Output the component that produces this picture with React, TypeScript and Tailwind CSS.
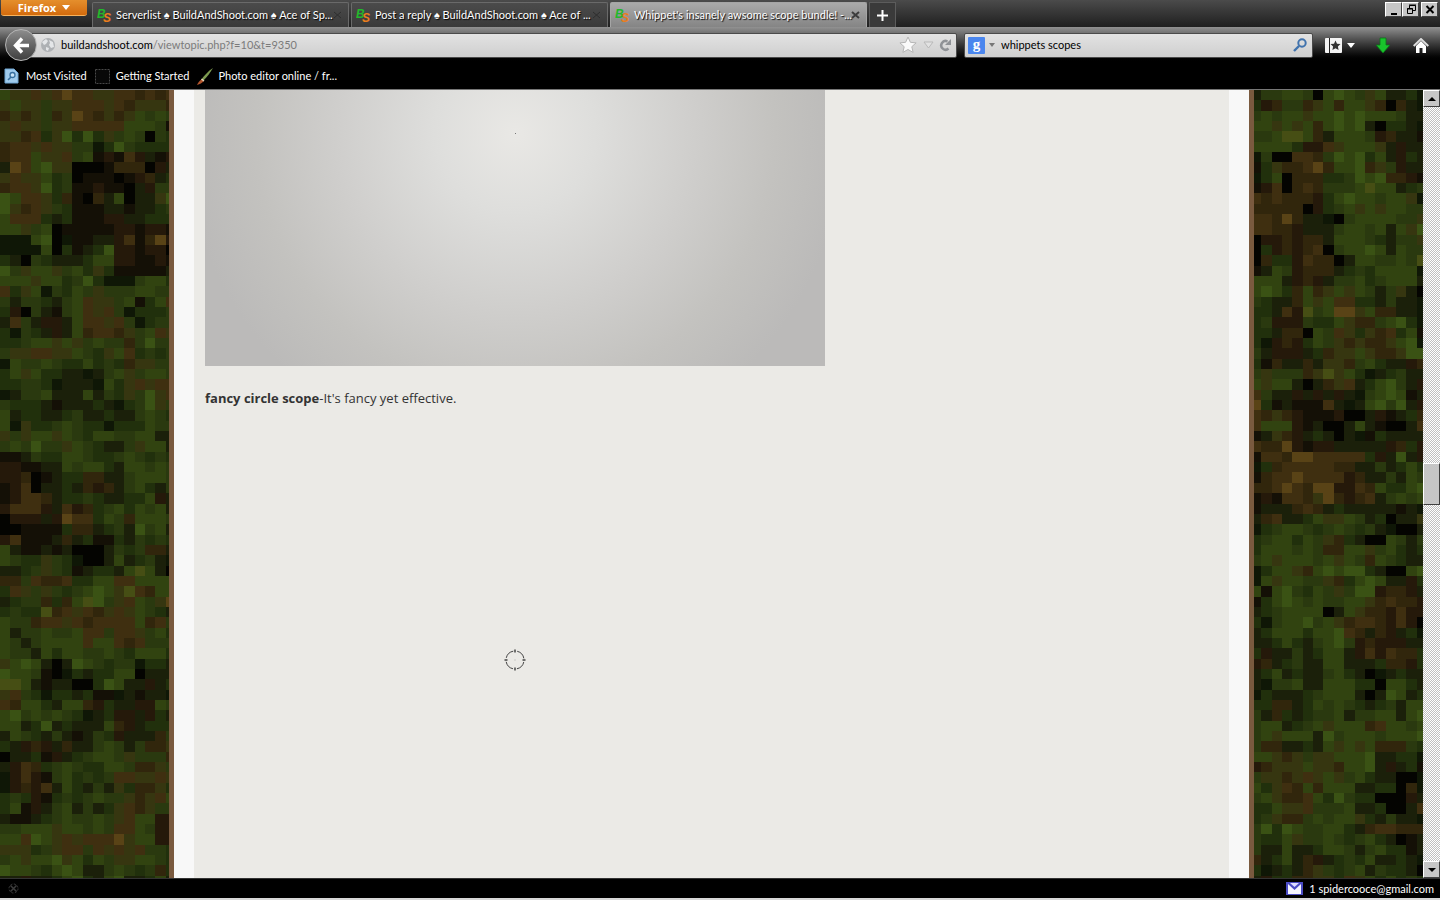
import type { ReactNode } from "react";

const camoColors: Record<string, string> = {
  k: "#040401",
  d: "#141006",
  e: "#0f1706",
  D: "#1b200a",
  f: "#21300c",
  g: "#2a390f",
  h: "#314310",
  G: "#3a5214",
  o: "#363610",
  O: "#464e14",
  b: "#3f2f10",
  B: "#594316",
  r: "#25190a",
  n: "#31260c",
};

// one letter per block, see camoColors
const leftCamo = [
  "hoobobBbboobbnbnb", "ohoogoobbbobnooon", "nonognoBbnonohghg", "oboogoobbbbbhhhgd", "oonbfoGfGfoghgkgf",
  "nbbobooggefGgffff", "nbbhoobghdrdbrDdr", "DBbhGookkkdnnnkrD", "oboohfgkdddkdrnDf", "nbboGfgddrddkDrgg",
  "GhbbofndknDhkDDoG", "GonbogfdddDDdDDfg", "hbbbfDfdddrrDDfff", "hhoghkdddddrrdrrd", "eeehGkeddDDrbdnBr",
  "eeeehkfdDfGrrdrrk", "fDkgfDDDfhhrrddrd", "GgohhoghfofdddddD", "hhhohhfgGfeeeghhf", "bfohegfhgoggghhgg",
  "gDggfDghbooghdfhb", "frkgDdghbobgefffg", "DbgDrrDhbbobgefgg", "fegfDrDhnbbnoghbo", "ffghhohoghggngGgg",
  "goobboohgfohbfgfg", "ehgghgffhfgfnoogg", "fhohffDDeDghoghhg", "ffggfeDDDehfobobb", "eDgghDDDhDgfogGob",
  "gfffDdDDDfDefgGog", "hDffDDfgDDfDDghgf", "heoffghgffefffhgg", "ogohhohgfhhgghhDD", "ghgGggohgfDDgohhD",
  "ddDgffhhgffghgfgf", "rrddDDhghhfDhhghg", "rrnkdDffnnDDghhhg", "drbkDDfDnrnDghfDg", "drbbnDffgfDDffhrD",
  "rbbbrDbrnfghfhghD", "krrrDrBbbfhgnhhhg", "kkddddfnnDfgDGghD", "rbdddDnDfddfDgfgf", "hDddDdDkkkDgfgnnD",
  "hgffogfekkDhDfgDe", "DDfgogfdDffDhOhDk", "nngbnnbffhhbbhhhh", "fbogogfghGhoObnhh", "DfggnfnhOGgobhgoB",
  "fgffOnbobnobohgfD", "hggnbbobnbbbbhnbg", "hDgghgghbbgbboghf", "hgDghhhhbhhbnbggg", "hggDhfhhgghgfhhhf",
  "ohGhDkDGhgfggeffD", "GhhgdkefDffhhkDDD", "OOhDdDDkkfGhDDrDf", "obgfeffDfddeDdDDe", "bnhhfDhhnrfDDrrhg",
  "hGghghgfeDfrrDrfD", "hhDfGDfDDDhnrDfff", "DhgfDgDdDgfrDDDng", "fDrnrDnDDghgDgnno", "kDDfdrDfghhgogggn",
  "Drbnfghgffhhgnnog", "erbrdghfgfgbboobo", "ernrbDhfDgDofnnof", "fgfrdfgfghggonobh", "fhdrDghDgDfobnogg",
  "DddDfghgghgobhhrr", "gghhhohhghgbbhgrr", "hhbGhobobbbBohhrr", "ooofgobbgbobobggf", "ghohhGohfhgoohhgf",
  "GhhgfhGhDDghgfgnf", "DDrDDfhGfDhGDDfhD",
];

const rightCamo = [
  "DgghhgkhGhgohDDfe", "frnggnohnhhonknDe", "ghghhohhGhGhhhgDD", "hhohohnhGhGDkffDe", "gghOOhnDhhhgrnDDd",
  "hhhhfrrbohhhoDrDD", "egkkbbngGhGfhDrfD", "dfonnbBnhhGnogrDD", "efhknnnffgGhGnnrd", "drbknbnggghOhhDfg",
  "bnbnnnrfhGhhghhoe", "nnnnnkrfghohohhgg", "bbnBnDDekghhhhggo", "bbnnrDDDghhghDhoG", "krrnrnnDhhhgfDggo",
  "kfrnrnbkghhGhDhgg", "knffrbnnkDhhgghgO", "dDhgrnnnDfgfhhhhe", "hhhDrnrDgghfghhhD", "hGhfnhnohohgDgoDk",
  "gfDDnhohbbffDgDDe", "ffDbrOghBBohnnDDe", "fgrrrgffhonnghGfe", "ffDnnkhgbofonbfhd", "fernrfhgononnohGe",
  "gDrrrDfnoohonnoGG", "fdnDDnDoonghfDDrn", "gogggnoOohfeDfgDD", "hohhDkDnobDfhGgDr", "bgDDrDrDrDeghGhdD",
  "BfdDdddbDeDhGgGDr", "bnonrdddrkkDrdDfn", "bhhhrdDkkDhDdkkDb", "dDonrDfDkDedfDDDD", "bnnBrdrrDDDDDrnfr",
  "dbbnBBbbbbbfrDGDr", "efnbbbbbnnDDgDfhf", "dnbbBbbbbrnDDgDhg", "nnbBbnBBrrbnhffhG", "drdbbnoBnrnbDghgh",
  "dDDDnbnDfDDDDDdDe", "DnbDDfhoohgDfkDDo", "efghhgfghgfgDekkD", "fghhfhgonfDkkhgDg", "fhhhghgnnhhoghfDf",
  "ghohhhghohgnhgfDD", "efhhonhGhGGfDkkhG", "ehohhggonfhGhDDrf", "hdhGgfhgogGGrnnrD", "dfhGhghgghhonbnnr",
  "DfghhhhkDhonnrbrr", "feghhGghonbbnrbrk", "DfhhhfhhGbnDnrDfe", "DDfhfDghGgrnrrrDD", "frDDgDfhhDrbrbnnf",
  "rnDfgDDhhDDDfnnrf", "DfhDfDDghfDkeDfDD", "DegghDDhhhffkhhfD", "efDDDfghhhDkDGhDf", "ffnnDfhghgfDfgDhh",
  "gDnfDfgghDgghhDhG", "ghhDfghohhhnbhhgh", "ghohhhDGghhhghhhG", "gnnDDfDhohohnnngf", "hhonogoohhhGDDffe",
  "rnooohoonhhGDrDfd", "goonobohoghfDDkke", "hfobnhnhhhDDffkne", "ghonnbhfGgffkkkrD", "ffhoobggghDDfkkDb",
  "fgonnghghhofDgDDe", "gGfGhgghhfDnbbnnn", "gffhogghgfghfDkdD", "gDDhDDfhhgDghffdD", "nDfhDnrDfgfhDDfDe",
  "feDfDnogfghDgffDk", "Drffnnoofbohfhfgf",
];

function Camo({ rows }: { rows: string[] }) {
  return (
    <svg className="h-[796px] w-[176px] shrink-0" viewBox="0 0 17 77" preserveAspectRatio="none" shapeRendering="crispEdges" aria-hidden="true">
      {rows.map((row, y) =>
        row.split("").map((c, x) => <rect key={`${x}-${y}`} x={x} y={y} width="1" height="1" fill={camoColors[c]} />)
      )}
    </svg>
  );
}

function SiteLogo() {
  return (
    <svg width="17" height="19" viewBox="0 0 17 19" className="shrink-0" aria-hidden="true">
      <text x="0" y="12" fill="#22b82c" fontFamily="Liberation Sans" fontStyle="italic" fontWeight="bold" fontSize="12">B</text>
      <text x="6" y="16" fill="#ea7d1c" fontFamily="Liberation Sans" fontStyle="italic" fontWeight="bold" fontSize="12">S</text>
    </svg>
  );
}

const tabs = [
  { title: "Serverlist ♠ BuildAndShoot.com ♠ Ace of Sp...", active: false },
  { title: "Post a reply ♠ BuildAndShoot.com ♠ Ace of ...", active: false },
  { title: "Whippet's insanely awsome scope bundle! -...", active: true },
];

function BrowserTab({ title, active }: { title: string; active: boolean }) {
  return (
    <div
      className={`flex h-[25px] w-[257px] min-w-0 items-center rounded-t-[2px] border-x border-t pr-1 pl-1 ${
        active
          ? "border-[#a5a5a5] bg-linear-to-b from-[#aaaaaa] to-[#858585]"
          : "border-[#6a6a6a] bg-linear-to-b from-[#4b4b4b] to-[#3a3a3a]"
      }`}
    >
      <SiteLogo />
      <button className="ml-0.5 min-w-0 flex-1 text-left whitespace-nowrap text-white [text-shadow:1px_1px_1px_#000]">
        {title}
      </button>
      <button aria-label="Close tab" className={active ? "text-[#3c3c3c]" : "text-[#2e2e2e]"}>
        <svg width="13" height="13" viewBox="0 0 13 13">
          <path d="M3 3l7 6M10 3l-7 6" stroke="currentColor" strokeWidth={active ? 2 : 1} />
        </svg>
      </button>
    </div>
  );
}

function ClassicButton({ label, className, children }: { label: string; className: string; children: ReactNode }) {
  return (
    <button
      aria-label={label}
      className={`flex shrink-0 items-center justify-center border border-t-white border-r-[#404040] border-b-[#404040] border-l-white bg-[#c6c6c6] text-black ${className}`}
    >
      {children}
    </button>
  );
}

function TabStrip() {
  return (
    <div className="flex h-[27px] items-start bg-linear-to-b from-[#4b4b4b] to-[#202020]">
      <button className="ml-px flex h-4 w-[86px] shrink-0 items-center justify-center gap-1.5 rounded-b-[3px] border-b border-[#f8b25c] bg-linear-to-b from-[#e58f2c] to-[#d36b0c] font-['Open_Sans',sans-serif] text-[11px] leading-4 font-bold text-white">
        Firefox
        <svg width="8" height="5" viewBox="0 0 8 5">
          <path d="M0 0h8L4 5z" fill="#fff" />
        </svg>
      </button>
      <div className="mt-0.5 ml-[5px] flex min-w-0 gap-0.5">
        {tabs.map((tab) => (
          <BrowserTab key={tab.title} {...tab} />
        ))}
        <button aria-label="New tab" className="flex h-[25px] w-[27px] shrink-0 items-center justify-center border-x border-t border-[#5c5c5c] bg-[#3a3a3a]">
          <svg width="11" height="11" viewBox="0 0 11 11">
            <path d="M5.5 0v11M0 5.5h11" stroke="#fff" strokeWidth="2" />
          </svg>
        </button>
      </div>
      <div className="mt-0.5 mr-0.5 ml-auto flex">
        <ClassicButton label="Minimize" className="h-[15px] w-[17px]">
          <svg width="12" height="11" viewBox="0 0 12 11"><path d="M3 9h6v2H3z" /></svg>
        </ClassicButton>
        <ClassicButton label="Restore" className="h-[15px] w-[17px]">
          <svg width="12" height="11" viewBox="0 0 12 11" fill="none" stroke="#000">
            <path d="M4.5 4V1.5h6v5H8M4 1h7" />
            <path d="M2.5 4.5h5v5h-5zM2 5h6" />
          </svg>
        </ClassicButton>
        <ClassicButton label="Close" className="ml-0.5 h-[15px] w-[17px]">
          <svg width="12" height="11" viewBox="0 0 12 11"><path d="M2.5 2l7 7M9.5 2l-7 7" stroke="#000" strokeWidth="2" /></svg>
        </ClassicButton>
      </div>
    </div>
  );
}

function Toolbar() {
  return (
    <div className="flex h-9 items-center bg-linear-to-b from-[#929292] to-black pl-[5px]">
      <button aria-label="Back" className="z-10 flex size-8 shrink-0 items-center justify-center rounded-full border border-[#b5b5b5] bg-linear-to-b from-[#8d8d8d] to-[#404040]">
        <svg width="17" height="17" viewBox="0 0 17 17" fill="none" stroke="#fff" strokeWidth="3.4">
          <path d="M9 1.5L2.5 8.5L9 15.5M3 8.5h13" />
        </svg>
      </button>
      <div className="-ml-2 flex h-[25px] min-w-0 flex-1 items-center rounded-[2px] border border-[#4a4a4a] bg-linear-to-b from-[#e2e2e2] to-[#cfcfcf] pr-1 pl-2.5">
        <svg width="16" height="16" viewBox="0 0 16 16" className="shrink-0">
          <circle cx="8" cy="8" r="7" fill="#aeb1b4" />
          <path d="M2 5l4-3 2 2-2 3-2 1zM9 3l4 2 1 5-3 1-2-3 1-2zM6 10l3 1-1 3-2-1z" fill="#e4e6e8" />
        </svg>
        <div className="ml-[5px] flex-1 text-[#7b7b7b]">
          <span className="text-black">buildandshoot.com</span>/viewtopic.php?f=10&amp;t=9350
        </div>
        <button aria-label="Bookmark this page">
          <svg width="18" height="18" viewBox="0 0 18 18">
            <path d="M9 1l2.4 5.3 5.7.6-4.3 3.8 1.3 5.7L9 13.5l-5.1 2.9 1.3-5.7L.9 6.9l5.7-.6z" fill="#fafafa" stroke="#b5b5b5" />
          </svg>
        </button>
        <button aria-label="Show history" className="ml-1.5">
          <svg width="11" height="8" viewBox="0 0 11 8"><path d="M1 1h9L5.5 7z" fill="#e2e2e2" stroke="#b9b9b9" /></svg>
        </button>
        <button aria-label="Reload" className="ml-1">
          <svg width="14" height="14" viewBox="0 0 14 14" fill="none">
            <path d="M9.5 3.5A4.3 4.3 0 1 0 10.5 10.5" stroke="#8f9296" strokeWidth="2.5" />
            <path d="M13 1v6H7z" fill="#8f9296" />
          </svg>
        </button>
      </div>
      <div className="ml-[7px] flex h-[25px] w-[349px] items-center rounded-[2px] border border-[#4a4a4a] bg-linear-to-b from-[#e2e2e2] to-[#cfcfcf] pr-1 pl-[3px]">
        <button aria-label="Search engine" className="flex items-center gap-1">
          <svg width="17" height="17" viewBox="0 0 17 17">
            <rect width="17" height="17" rx="1" fill="#4a86ee" />
            <text x="8.5" y="12" textAnchor="middle" fill="#fff" fontFamily="Liberation Serif" fontWeight="bold" fontSize="15">g</text>
          </svg>
          <svg width="6" height="4" viewBox="0 0 6 4"><path d="M0 0h6L3 4z" fill="#777" /></svg>
        </button>
        <input aria-label="Search" defaultValue="whippets scopes" className="ml-1.5 min-w-0 flex-1 bg-transparent text-black outline-none" />
        <button aria-label="Search" className="mr-px">
          <svg width="14" height="14" viewBox="0 0 14 14" fill="none" stroke="#4173ad">
            <circle cx="9" cy="5" r="3.7" strokeWidth="2" />
            <path d="M6 8l-5 5" strokeWidth="2.4" />
          </svg>
        </button>
      </div>
      <button aria-label="Bookmarks" className="ml-3 flex items-center gap-[5px]">
        <svg width="17" height="15" viewBox="0 0 17 15">
          <rect width="17" height="15" rx="1" fill="#f4f4f4" />
          <path d="M4.5 0v15" stroke="#222" />
          <path d="M10.5 2.5l1.5 3.2 3.5.4-2.6 2.4.7 3.5-3.1-1.7-3.1 1.7.7-3.5-2.6-2.4 3.5-.4z" fill="#333" />
        </svg>
        <svg width="8" height="5" viewBox="0 0 8 5"><path d="M0 0h8L4 5z" fill="#fff" /></svg>
      </button>
      <button aria-label="Downloads" className="ml-5">
        <svg width="16" height="17" viewBox="0 0 16 17">
          <path d="M5 1h6v7h4l-7 8-7-8h4z" fill="#19c42c" stroke="#0a7317" strokeWidth=".8" />
        </svg>
      </button>
      <button aria-label="Home" className="mr-[11px] ml-[22px]">
        <svg width="16" height="15" viewBox="0 0 16 15">
          <path d="M3 8l5-5 5 5v7H9.500v-5h-3v5H3z" fill="#fff" />
          <path d="M.7 8L8 1l7.3 7" fill="none" stroke="#ddd" strokeWidth="2" />
        </svg>
      </button>
    </div>
  );
}

function BookmarksBar() {
  return (
    <nav className="flex h-[27px] items-center border-b border-[#777] bg-black pl-1 text-white">
      <a href="#visited" className="flex items-center gap-1.5">
        <svg width="16" height="16" viewBox="0 0 16 16">
          <path d="M1 1h9l4 4v10H1z" fill="#9fcaec" stroke="#6ea5d2" />
          <circle cx="8.5" cy="7" r="2.5" fill="#c9e4f8" stroke="#376f9f" strokeWidth="1.3" />
          <path d="M7 9l-3 3" stroke="#376f9f" strokeWidth="1.6" />
        </svg>
        Most Visited
      </a>
      <a href="#started" className="ml-2 flex items-center gap-1.5">
        <svg width="15" height="15" viewBox="0 0 15 15">
          <rect x=".5" y=".5" width="14" height="14" fill="#080808" stroke="#484848" strokeDasharray="2 1" />
        </svg>
        Getting Started
      </a>
      <a href="#editor" className="ml-2 flex items-center gap-1">
        <svg width="17" height="17" viewBox="0 0 17 17">
          <path d="M16 0C11 3 7 8 4 12l2 1C10 9 13 5 16 0z" fill="#7d9b50" />
          <path d="M5 11l2 2c-2 2-4 3-7 4 1-2 2-4 5-6z" fill="#b4552d" />
          <path d="M4.5 11l2.5 2" stroke="#e2d9c0" strokeWidth="1.5" />
        </svg>
        Photo editor online / fr...
      </a>
    </nav>
  );
}

function ScrollBar() {
  return (
    <div className="flex w-[17px] shrink-0 flex-col bg-[repeating-conic-gradient(#ffffff_0%_25%,#c0c0c0_0%_50%)] bg-[length:2px_2px]">
      <ClassicButton label="Scroll up" className="h-[17px] w-full">
        <svg width="8" height="4" viewBox="0 0 8 4"><path d="M4 0l4 4H0z" /></svg>
      </ClassicButton>
      <div className="flex-1" />
      <ClassicButton label="Scroll position" className="h-[42px] w-full">{null}</ClassicButton>
      <div className="flex-1" />
      <ClassicButton label="Scroll down" className="h-[17px] w-full">
        <svg width="8" height="4" viewBox="0 0 8 4"><path d="M0 0h8L4 4z" /></svg>
      </ClassicButton>
    </div>
  );
}

function Post() {
  return (
    <main className="flex min-w-0 flex-1 overflow-hidden border-x-[5px] border-[#7a5a3f] bg-[#f8f8f8] px-5">
      <article className="min-w-0 flex-1 bg-[#ebeae6] pl-[11px]">
        <div className="flex h-[276px] max-w-[620px] justify-center bg-[radial-gradient(circle_at_50%_43px,#e9e8e5_0,#dededc_80px,#cfcecc_180px,#c3c2bf_260px,#bbbab9_330px)] pt-[43px]">
          <span className="size-px bg-[#777]" />
        </div>
        <p className="mt-[22px] font-['Open_Sans',sans-serif] text-[13px] leading-5 text-[#333]">
          <strong>fancy circle scope</strong>-It's fancy yet effective.
        </p>
        <div className="flex max-w-[620px] justify-center pt-[241px]">
          <svg width="22" height="22" viewBox="0 0 22 22" fill="none" stroke="#444">
            <circle cx="11" cy="11" r="9" strokeDasharray="10.1 4.04" strokeDashoffset="-2" />
            <path d="M11 .5v3M11 18.5v3M.5 11h3M18.5 11h3" strokeWidth="1.5" />
            <path d="M10.5 11h1" stroke="#aaa" />
          </svg>
        </div>
      </article>
    </main>
  );
}

export default function App() {
  return (
    <div className="flex h-screen flex-col overflow-hidden bg-black font-[Lato,'Liberation_Sans',sans-serif] text-[11px] leading-4">
      <header className="shrink-0">
        <TabStrip />
        <Toolbar />
        <BookmarksBar />
      </header>
      <div className="flex min-h-0 flex-1">
        <div className="flex w-[169px] shrink-0 overflow-hidden bg-[#20300c]">
          <Camo rows={leftCamo} />
        </div>
        <Post />
        <div className="flex w-[169px] shrink-0 justify-center overflow-hidden bg-[#20300c]">
          <Camo rows={rightCamo} />
        </div>
        <ScrollBar />
      </div>
      <footer className="flex h-[22px] shrink-0 items-center border-t border-b-2 border-t-[#333] border-b-[#d8d8d8] px-1.5 text-white">
        <button aria-label="Close status bar" className="ml-0.5">
          <svg width="11" height="11" viewBox="0 0 11 11" fill="none" stroke="#3c3c3c">
            <circle cx="5.5" cy="5.5" r="4.5" strokeDasharray="2 1.5" />
            <path d="M2.5 2.5l6 6M8.5 2.5l-6 6" strokeWidth="1.5" />
          </svg>
        </button>
        <a href="#mail" className="ml-auto flex items-center gap-1.5">
          <svg width="17" height="13" viewBox="0 0 17 13">
            <rect width="17" height="13" fill="#4b4cc4" />
            <path d="M2 2v10h13V2L8.5 8z" fill="#f4f4ff" />
            <path d="M4 1h9L8.5 5z" fill="#dcdcff" />
          </svg>
          1 spidercooce@gmail.com
        </a>
      </footer>
    </div>
  );
}
